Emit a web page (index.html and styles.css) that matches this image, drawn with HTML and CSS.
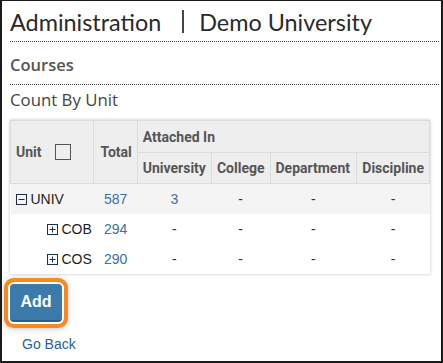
FILE: index.html
```html
<!DOCTYPE html>
<html>
<head>
<meta charset="utf-8">
<link rel="stylesheet" href="styles.css">
</head>
<body>
<div class="frame">
  <div class="title">
    <span class="title-main">Administration</span>
    <span class="title-sep"></span>
    <span class="title-sub">Demo University</span>
  </div>
  <div class="section">Courses</div>
  <div class="subsection">Count By Unit</div>
  <table class="grid">
    <thead>
      <tr>
        <th rowspan="2" class="c-unit"><span class="unit-head">Unit <span class="checkbox"></span></span></th>
        <th rowspan="2" class="c-total">Total</th>
        <th colspan="4" class="c-attached">Attached In</th>
      </tr>
      <tr>
        <th class="c-univ">University</th>
        <th class="c-coll">College</th>
        <th class="c-dept">Department</th>
        <th class="c-disc">Discipline</th>
      </tr>
    </thead>
    <tbody>
      <tr class="row-alt">
        <td class="unit"><svg class="tog" viewBox="0 0 11 11" width="11" height="11"><rect x="0.5" y="0.5" width="10" height="10" fill="none" stroke="#1c2f4d"/><path d="M2.5 5.5h6" stroke="#1c2f4d"/></svg>UNIV</td>
        <td class="num"><a>587</a></td>
        <td class="num"><a>3</a></td>
        <td class="num">-</td>
        <td class="num">-</td>
        <td class="num">-</td>
      </tr>
      <tr>
        <td class="unit child"><svg class="tog" viewBox="0 0 11 11" width="11" height="11"><rect x="0.5" y="0.5" width="10" height="10" fill="none" stroke="#1c2f4d"/><path d="M2.5 5.5h6M5.5 2.5v6" stroke="#1c2f4d"/></svg>COB</td>
        <td class="num"><a>294</a></td>
        <td class="num">-</td>
        <td class="num">-</td>
        <td class="num">-</td>
        <td class="num">-</td>
      </tr>
      <tr>
        <td class="unit child"><svg class="tog" viewBox="0 0 11 11" width="11" height="11"><rect x="0.5" y="0.5" width="10" height="10" fill="none" stroke="#1c2f4d"/><path d="M2.5 5.5h6M5.5 2.5v6" stroke="#1c2f4d"/></svg>COS</td>
        <td class="num"><a>290</a></td>
        <td class="num">-</td>
        <td class="num">-</td>
        <td class="num">-</td>
        <td class="num">-</td>
      </tr>
    </tbody>
  </table>
  <div class="actions">
    <button class="btn-add">Add</button>
  </div>
  <a class="back">Go Back</a>
</div>
</body>
</html>
```

FILE: styles.css
```css
html, body {
  margin: 0;
  padding: 0;
  background: #fff;
}
.frame {
  width: 443px;
  height: 363px;
  box-sizing: border-box;
  border: 2px solid #1b1b1b;
  border-top-width: 1px;
  padding: 0 2px 0 8px;
  overflow: hidden;
  font-family: "Liberation Sans", Arial, sans-serif;
}
.title {
  display: flex;
  align-items: center;
  height: 39px;
  padding-top: 1px;
  border-bottom: 1px dotted #444;
  font-family: Lato, "Open Sans", sans-serif;
  font-size: 23.4px;
  color: #2a2a2a;
}
.title-sep {
  display: inline-block;
  width: 2px;
  height: 23px;
  background: #444;
  margin: 0 15px 0 21px;
}
.section {
  height: 43px;
  box-sizing: border-box;
  padding-top: 13px;
  border-bottom: 1px dotted #444;
  font-family: "Open Sans", Lato, sans-serif;
  font-weight: 600;
  font-size: 16.5px;
  line-height: 20px;
  color: #555;
}
.subsection {
  padding-top: 5px;
  height: 28px;
  font-family: "Open Sans", Lato, sans-serif;
  font-size: 16.8px;
  line-height: 20px;
  color: #444;
}
.grid {
  margin-top: 2px;
  border-collapse: collapse;
  width: 420px;
  box-shadow: 0 0 3px rgba(0,0,0,0.25);
}
.grid th {
  background: #eee;
  border: 1px solid #dcdcdc;
  font-family: Roboto, "Liberation Sans", sans-serif;
  font-weight: 700;
  font-size: 14px;
  color: #555;
  text-align: left;
  padding: 0 5px;
  height: 30px;
}
.grid thead tr:first-child th { height: 31px; }
.grid th.c-total { padding-left: 6px; }
.c-unit { width: 75px; }
.c-total { width: 31px; }
.c-univ { width: 63px; }
.c-coll { width: 47px; }
.c-dept { width: 76px; }
.unit-head {
  display: inline-flex;
  align-items: center;
}
.checkbox {
  display: inline-block;
  width: 14px;
  height: 14px;
  border: 1px solid #555;
  margin-left: 13px;
}
.grid td {
  height: 30px;
  padding: 0;
  font-size: 14px;
  color: #333;
}
.grid .row-alt td { background: #f4f4f4; }
.grid td.num { text-align: center; }
.grid td a { color: #3b70a6; }
.grid td.unit {
  color: #1e1e1e;
  padding-left: 5px;
  font-size: 14px;
}
.grid td.unit.child { padding-left: 36px; }
.tog {
  display: inline-block;
  margin-right: 4px;
  vertical-align: -1px;
}
.actions {
  padding: 10px 0 0 0;
  height: 46px;
}
.btn-add {
  width: 52px;
  height: 38px;
  border: 0;
  border-bottom: 2px solid #2c5f88;
  border-radius: 4px;
  background: #3c7aab;
  color: #fff;
  font-family: "Liberation Sans", Arial, sans-serif;
  font-weight: 700;
  font-size: 16px;
  box-shadow: 0 0 0 2px #fff, 0 0 0 6px #f7891f, 0 1px 6px 6px rgba(0,0,0,0.2);
}
.back {
  display: block;
  margin: 6px 0 0 12px;
  font-size: 14px;
  color: #2d5f98;
}
```
